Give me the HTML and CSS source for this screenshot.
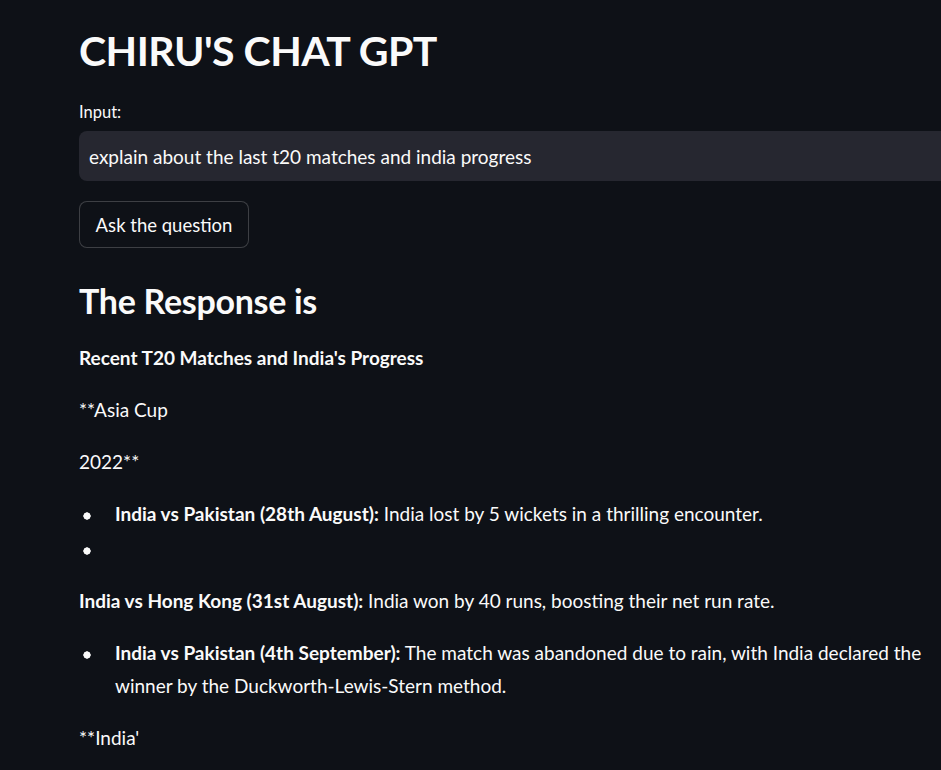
FILE: index.html
```html
<!DOCTYPE html>
<html lang="en">
<head>
<meta charset="utf-8">
<title>CHIRU'S CHAT GPT</title>
<link rel="stylesheet" href="styles.css">
</head>
<body>
<main class="main">
  <h1 class="title">CHIRU'S CHAT GPT</h1>
  <label class="label" for="q">Input:</label>
  <div class="input-wrap">
    <input id="q" class="input" type="text" value="explain about the last t20 matches and india progress">
  </div>
  <button class="btn" type="button">Ask the question</button>
  <h2 class="subtitle">The Response is</h2>
  <div class="md">
    <p><strong>Recent T20 Matches and India's Progress</strong></p>
    <p>**Asia Cup</p>
    <p>2022**</p>
    <ul>
      <li><strong>India vs Pakistan (28th August):</strong> India lost by 5 wickets in a thrilling encounter.</li>
      <li></li>
    </ul>
    <p><strong>India vs Hong Kong (31st August):</strong> India won by 40 runs, boosting their net run rate.</p>
    <ul>
      <li><strong>India vs Pakistan (4th September):</strong> The match was abandoned due to rain, with India declared the winner by the Duckworth-Lewis-Stern method.</li>
    </ul>
    <p>**India'</p>
  </div>
</main>
</body>
</html>
```

FILE: styles.css
```css
html, body {
  margin: 0;
  padding: 0;
  background: #0e1117;
  color: #fafafa;
  font-family: Lato, "Open Sans", sans-serif;
  overflow: hidden;
}

.main {
  padding: 25px 0 0 79px;
  display: flex;
  flex-direction: column;
  align-items: flex-start;
}

.title {
  margin: 0;
  font-size: 41px;
  font-weight: 700;
  line-height: 52px;
  letter-spacing: -0.5px;
}

.label {
  margin-top: 24px;
  font-size: 16.5px;
  line-height: 22px;
}

.input-wrap {
  margin-top: 8px;
  align-self: stretch;
  height: 50px;
  background: #262730;
  border-radius: 8px 0 0 8px;
  display: flex;
  align-items: center;
}

.input {
  flex: 1;
  background: transparent;
  border: 0;
  outline: none;
  color: #fafafa;
  font-family: inherit;
  font-size: 19px;
  padding: 0 10px;
}

.btn {
  margin-top: 20px;
  width: 170px;
  height: 47px;
  background: #0e1117;
  color: #fafafa;
  border: 1px solid rgba(250, 250, 250, 0.2);
  border-radius: 8px;
  font-family: inherit;
  font-size: 18.5px;
  padding: 0 15px;
}

.subtitle {
  margin: 31px 0 0;
  font-size: 34px;
  font-weight: 700;
  line-height: 44px;
  letter-spacing: -0.3px;
}

.md {
  margin-top: 18px;
  font-size: 19px;
  line-height: 33px;
  padding-right: 10px;
}

.md p {
  margin: 0 0 19px;
}

.md ul {
  margin: 0 0 19px;
  padding: 0 0 0 36px;
  list-style: none;
}

.md li {
  margin-bottom: 2px;
  min-height: 33px;
}

.md li::before {
  content: "";
  display: inline-block;
  width: 36px;
  height: 8px;
  margin-left: -36px;
  vertical-align: 1px;
  background: radial-gradient(circle at 8px 4px, #fafafa 3.4px, transparent 3.9px);
}
```
